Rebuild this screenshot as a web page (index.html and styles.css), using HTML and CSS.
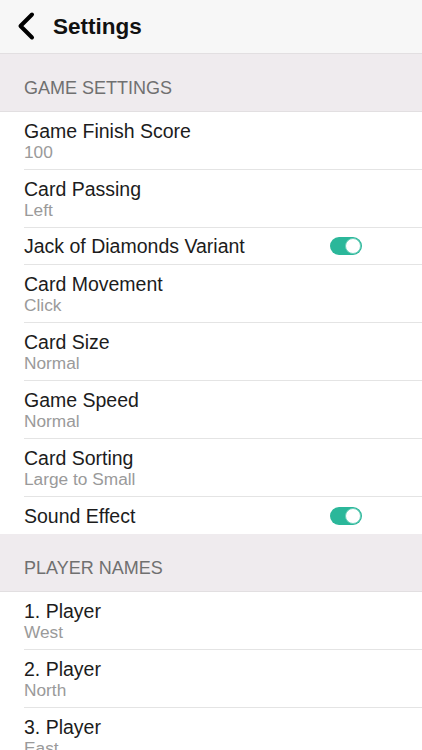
FILE: index.html
```html
<!DOCTYPE html>
<html>
<head>
<meta charset="utf-8">
<link rel="stylesheet" href="styles.css">
</head>
<body>
<div class="screen">
  <header class="nav">
    <svg class="back" width="24" height="30" viewBox="0 0 24 30"><path d="M17 3.5 L5.5 15 L17 26.5" fill="none" stroke="#000" stroke-width="4" stroke-linecap="round" stroke-linejoin="round"/></svg>
    <span class="nav-title">Settings</span>
  </header>
  <div class="section">GAME SETTINGS</div>
  <ul class="list">
    <li class="row"><div class="title">Game Finish Score</div><div class="sub">100</div></li>
    <li class="row"><div class="title">Card Passing</div><div class="sub">Left</div></li>
    <li class="row single"><div class="title">Jack of Diamonds Variant</div><span class="toggle"><span class="knob"></span></span></li>
    <li class="row"><div class="title">Card Movement</div><div class="sub">Click</div></li>
    <li class="row"><div class="title">Card Size</div><div class="sub">Normal</div></li>
    <li class="row"><div class="title">Game Speed</div><div class="sub">Normal</div></li>
    <li class="row"><div class="title">Card Sorting</div><div class="sub">Large to Small</div></li>
    <li class="row single last"><div class="title">Sound Effect</div><span class="toggle"><span class="knob"></span></span></li>
  </ul>
  <div class="section">PLAYER NAMES</div>
  <ul class="list">
    <li class="row"><div class="title">1. Player</div><div class="sub">West</div></li>
    <li class="row"><div class="title">2. Player</div><div class="sub">North</div></li>
    <li class="row"><div class="title">3. Player</div><div class="sub">East</div></li>
  </ul>
</div>
</body>
</html>
```
FILE: styles.css
```css
html, body { margin: 0; padding: 0; background: #fff; }
.screen {
  width: 422px; height: 750px; overflow: hidden;
  font-family: "Liberation Sans", Arial, sans-serif;
  color: #1a1a1a;
}
.nav {
  height: 54px; box-sizing: border-box;
  background: #f7f7f7; border-bottom: 1px solid #e2dfe1;
  display: flex; align-items: center; padding-left: 15px;
}
.back { margin-right: 14px; margin-top: -1px; }
.nav-title { font-size: 22.5px; font-weight: bold; color: #111; }
.section {
  height: 58px; box-sizing: border-box;
  background: #efebee; border-bottom: 1px solid #e2dfe1;
  padding: 23px 0 0 24px;
  font-size: 18px; color: #707070; line-height: 22px;
}
.list { list-style: none; margin: 0; padding: 0 0 0 24px; }
.row {
  box-sizing: border-box; height: 58px;
  padding: 8px 0 0 0;
  border-bottom: 1px solid #e4e4e4;
}
.row.last { border-bottom: none; }
.row.single {
  height: 37px; padding: 0 60px 0 0;
  display: flex; align-items: center; justify-content: space-between;
}
.title { font-size: 19.5px; line-height: 22px; color: #1c1c1c; }
.sub { font-size: 17.3px; line-height: 20px; color: #9a9a9a; }
.toggle {
  width: 32px; height: 18px; border-radius: 9px;
  background: #2bb79a; position: relative; flex: none;
}
.knob {
  position: absolute; right: 1px; top: 1px;
  width: 14px; height: 14px; border-radius: 50%;
  background: #fff; border: 1px solid #6fd0bc;
}
```
